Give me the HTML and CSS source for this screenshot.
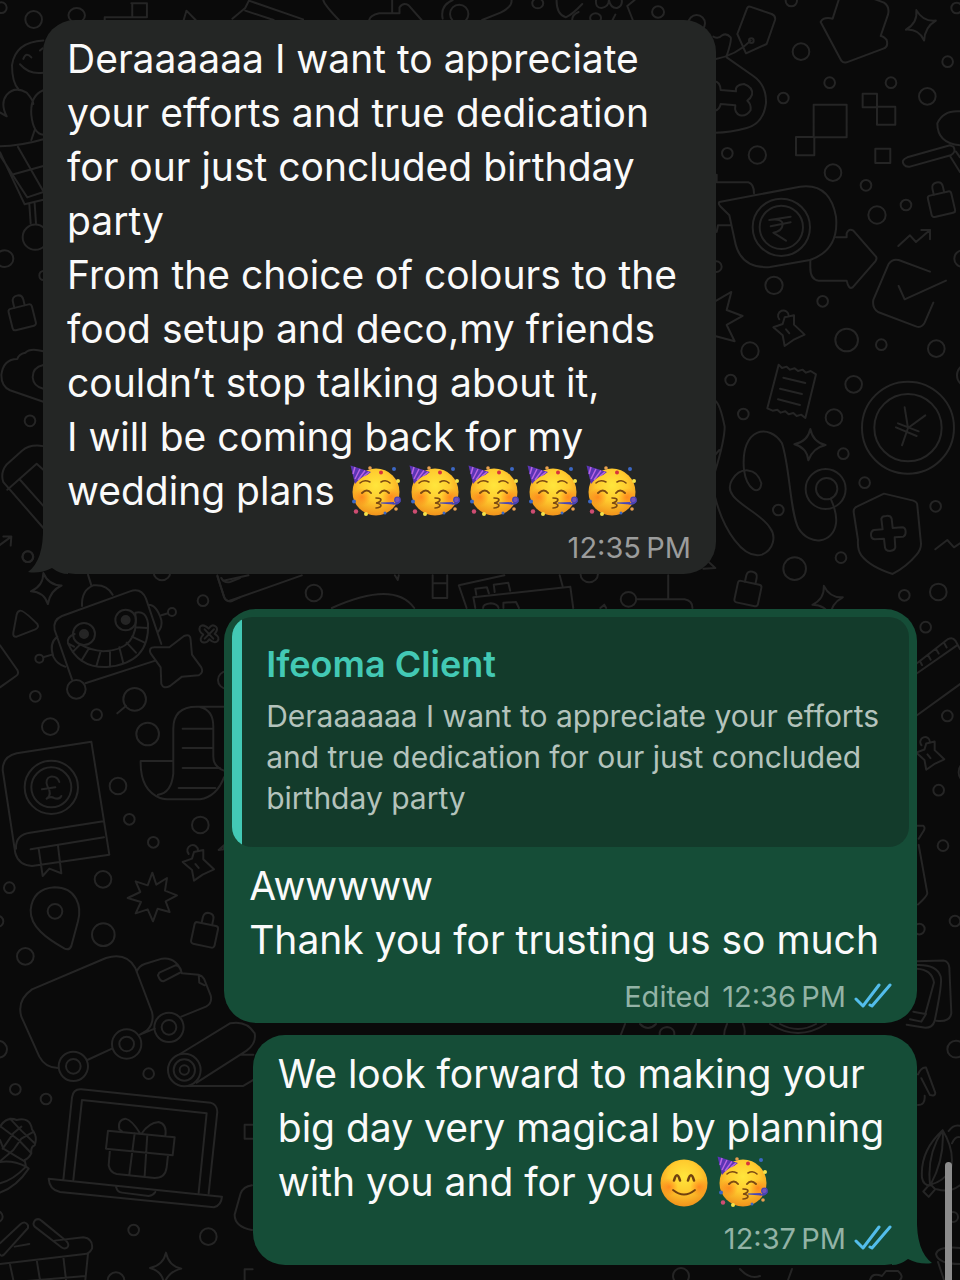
FILE: index.html
```html
<!DOCTYPE html>
<html lang="en">
<head>
  <meta charset="utf-8">
  <title>Chat</title>
  <link rel="stylesheet" href="styles.css">
</head>
<body>
  <!-- doodle wallpaper -->
  <svg class="wallpaper" viewBox="0 0 960 1280" preserveAspectRatio="xMidYMin slice" aria-hidden="true">
    <defs>
      <path id="spark" d="M0-48Q8-8 46 0Q8 8-6 46Q-10 8-48-2Q-8-10 0-48Z"/>
      <g id="lock"><rect x="-36" y="-22" width="72" height="66" rx="8"/><path d="M-16-22V-40Q-16-56 0-56T16-40V-22"/></g>
      <path id="pin" d="M-8-34L20-40 20-12 52 18 18 34-8 52-14 20-42-4-14-14ZM-24-28A16 16 0 1 1 4-38M-4 2L6 14"/>
      <path id="burst" d="M0-72L12-36 44-56 38-18 74-4 40 14 52 46 16 36 2 74-14 38-50 50-34 16-74 4-36-14-50-46-14-34Z"/>
    </defs>

    <!-- strip above the first message -->
    <g transform="scale(.4592 .3333)">
      <path d="M286 10H320V52H228V60M288 10V52M400 60L406 32 426 60M506 56L534 24 542 2 660 58M534 32L596 60M704 0Q706 14 738 60M854 0V40H826Q806 46 804 60M854 40H870V22Q878 6 890 16L918 60M986 0Q958 16 964 56M1114 0Q1116 20 1090 38L1050 60M1212 0Q1212 44 1232 52Q1246 44 1268 12M1246 60Q1246 44 1260 36M1298 0Q1296 24 1310 24Q1326 20 1326 0Q1330 26 1344 24Q1356 18 1354 0M1368 16L1382 0M1366 18L1378 60M1340 44L1334 60"/>
      <ellipse cx="167" cy="46" rx="18" ry="22"/><ellipse cx="1000" cy="42" rx="20" ry="28"/><ellipse cx="1171" cy="10" rx="12" ry="15"/><ellipse cx="1297" cy="54" rx="12" ry="14"/><ellipse cx="1433" cy="36" rx="13" ry="17"/>
    </g>

    <!-- right side, top -->
    <g transform="translate(700 0) scale(.3333)">
      <path d="M150 20L215 42Q228 48 225 60L200 132 138 160 112 102 140 28Q143 18 150 20ZM45 178Q110 165 152 122"/>
      <circle cx="154" cy="122" r="7"/>
      <path d="M40 110Q55 118 66 106Q80 98 92 112Q96 120 80 168M80 172L160 228Q200 256 198 310Q190 370 140 384Q90 398 45 398"/>
      <path d="M45 244Q60 246 62 270L108 274Q104 254 132 252Q160 262 156 284Q152 296 142 302Q154 312 152 330Q140 350 120 346Q102 338 106 316L62 312Q58 330 45 332"/>
      <path d="M416 0L398 56Q370 50 362 66L424 182Q430 190 440 187L550 146Q566 140 560 120Q550 108 542 108L564 44Q570 20 552 8L520-4"/>
      <use href="#spark" transform="translate(664 76) rotate(-18)"/>
      <path d="M341 314H440V412H341ZM288 411H343V466H288ZM488 281H531V322H488ZM531 320H586V374H531ZM526 446H571V489H526Z"/>
      <path d="M780 334Q730 330 712 370Q712 430 780 436M750 436L622 472Q602 480 612 494Q618 502 630 500L752 466Q770 456 760 440ZM750 468L780 516M768 455L780 472"/>
      <path d="M50 524V547H145Q162 552 162 580M50 696L54 676H90M58 606L300 560Q390 548 408 650Q418 750 330 780L210 801Q120 808 104 720L88 646 60 618Q54 610 58 606Z"/>
      <circle cx="244" cy="682" r="86"/><circle cx="244" cy="682" r="65"/>
      <path d="M208 660L272 650M212 679L272 667M214 659Q248 656 248 674Q246 694 220 698L258 722"/>
      <path d="M408 712H440V700Q446 684 460 692L528 770Q532 776 526 784L458 862Q446 870 440 842H356Q330 840 331 800V780"/>
      <use href="#lock" transform="translate(722 602) rotate(-13)"/>
      <path d="M595 738L630 706 648 726 690 690M664 690H690V718M690 815L596 780Q576 776 566 792L520 900Q516 924 534 936L650 980Q666 984 674 968L700 908M596 858L614 898 738 842"/>
      <path d="M45 904L94 876 80 930 128 948 80 975 104 1024 45 1008"/>
      <use href="#pin" transform="translate(262 986)"/>
      <g><circle cx="274" cy="2" r="17"/><circle cx="303" cy="155" r="25"/><circle cx="389" cy="248" r="16"/><circle cx="573" cy="248" r="16"/><circle cx="250" cy="294" r="16"/><circle cx="682" cy="289" r="25"/><circle cx="743" cy="185" r="16"/><circle cx="770" cy="24" r="16"/><circle cx="82" cy="460" r="16"/><circle cx="172" cy="465" r="26"/><circle cx="399" cy="518" r="25"/><circle cx="498" cy="556" r="16"/><circle cx="531" cy="645" r="26"/><circle cx="618" cy="615" r="16"/><circle cx="788" cy="776" r="25"/><circle cx="49" cy="800" r="16"/><circle cx="222" cy="856" r="26"/><circle cx="368" cy="904" r="16"/><circle cx="-10" cy="70" r="25"/></g>
    </g>

    <!-- right side, middle -->
    <g transform="translate(700 300) scale(.3333)">
      <path d="M236 194l10 10 14-4 10 9 14-4 10 8 14-4 10 9 14-5 16 10L316 354l-12-10-14 4-10-9-14 4-10-9-14 4-10-9-14 3-16-7ZM250 233L316 249M240 266L306 282M234 298L300 315"/>
      <use href="#spark" transform="translate(331 435)"/>
      <circle cx="624" cy="383" r="138"/><circle cx="624" cy="383" r="101"/>
      <path d="M614 322L624 384 606 436M624 384L676 346M594 370L656 394M588 382L650 408"/>
      <path d="M45 302Q60 310 74 380Q74 420 45 515M45 465L58 450M45 590C70 690 130 780 186 764C220 750 230 710 210 684C180 630 60 600 96 540C120 500 170 500 184 550C180 590 140 570 132 510C120 380 210 370 246 430C270 500 270 640 296 686C330 740 400 730 408 670Q412 640 392 596"/>
      <circle cx="377" cy="567" r="60"/><circle cx="380" cy="566" r="32"/>
      <path d="M552 581L640 602Q652 606 652 616L663 730Q664 748 650 764Q620 800 578 822Q510 800 484 766Q472 750 474 720L461 636Q460 624 472 619Z"/>
      <path d="M544 656Q546 648 558 648Q572 646 575 656L578 684 606 682Q616 682 617 694Q618 706 610 710L584 712 586 742Q584 752 570 753Q556 752 555 742L552 716 524 718Q512 716 513 702Q514 692 522 690L548 688Z"/>
      <path d="M706 748L742 720 762 742 780 730"/>
      <use href="#lock" transform="translate(146 870) rotate(12)"/>
      <use href="#spark" transform="translate(384 904) rotate(-15)"/>
      <path d="M22 782L46 804 10 806"/>
      <g><circle cx="440" cy="120" r="34"/><circle cx="544" cy="134" r="16"/><circle cx="709" cy="146" r="25"/><circle cx="150" cy="153" r="26"/><circle cx="92" cy="240" r="16"/><circle cx="461" cy="253" r="25"/><circle cx="130" cy="342" r="16"/><circle cx="402" cy="353" r="25"/><circle cx="430" cy="461" r="16"/><circle cx="494" cy="548" r="16"/><circle cx="707" cy="619" r="16"/><circle cx="235" cy="630" r="16"/><circle cx="423" cy="773" r="16"/><circle cx="284" cy="806" r="34"/><circle cx="613" cy="886" r="16"/><circle cx="715" cy="876" r="25"/><circle cx="805" cy="226" r="34"/></g>
    </g>

    <!-- left side, robot and book -->
    <g transform="translate(0 560) scale(.3333)">
      <use href="#spark" transform="translate(140 86) rotate(-12)"/>
      <path d="M60 152Q70 150 112 192Q118 202 106 208L50 230Q38 232 40 218L50 164Q52 154 60 152Z"/>
      <path d="M216 358L164 210Q158 180 186 168L390 94Q424 82 438 116L484 252M256 370L466 302M246 138Q244 90 280 76Q320 72 338 104M274 76L264 44M172 230Q146 250 160 290Q172 314 196 320M132 291L156 284M446 134Q470 134 484 180Q488 200 474 216M484 166L504 160"/>
      <circle cx="118" cy="296" r="12"/><circle cx="516" cy="156" r="12"/><circle cx="229" cy="388" r="28"/>
      <circle cx="252" cy="222" r="33"/><circle cx="377" cy="180" r="31"/><circle class="dot" cx="252" cy="222" r="12"/><circle class="dot" cx="377" cy="180" r="12"/>
      <path d="M224 222Q200 230 204 250Q236 324 320 321Q450 310 444 190Q438 150 406 158M406 160Q420 270 310 274Q270 270 242 254M204 250L222 260M218 276L240 254M244 302L266 266M290 316L302 274M330 320V274M370 310L358 262M408 278L380 248M434 248L396 230M442 204L406 202"/>
      <path d="M552 228Q572 220 572 240L576 284 604 322Q612 338 596 346L546 350 510 378Q490 388 484 372L482 322 452 280Q444 262 464 262L508 262Z"/>
      <path d="M600 200Q610 190 626 206Q636 190 648 200Q656 208 644 222Q662 232 652 244Q642 252 628 238Q620 252 606 246Q596 238 610 224Q594 214 600 200ZM614 208L640 236M642 208L614 236"/>
      <path d="M0 256L52 330Q58 342 48 348L0 382M352 460L378 438"/>
      <path d="M274 545L50 580Q8 590 8 630L46 880Q56 916 96 918L328 884ZM310 784L90 818Q46 824 48 866M312 832L92 868M116 866L128 948 148 926 184 940 174 858"/>
      <circle cx="154" cy="682" r="80"/><circle cx="154" cy="682" r="60"/>
      <path d="M178 666Q172 648 152 650Q134 656 142 678Q158 704 140 716Q152 708 162 714Q178 720 184 708M126 688L166 682"/>
      <path d="M672 440H590Q520 440 520 506V640Q514 700 474 704M600 441Q640 450 640 500V590Q640 620 672 632M516 603H422Q420 690 480 714Q490 718 510 718H600Q650 710 672 652M548 506H636M548 564H636M548 624H660M536 684H646"/>
      <use href="#pin" transform="translate(590 910)"/>
      <path d="M656 870L672 856V868ZM652 46L672 110Q678 126 694 124L720 112M664 54Q672 70 690 66L720 54"/>
      <g><circle cx="609" cy="122" r="16"/><circle cx="486" cy="36" r="25"/><circle cx="84" cy="-10" r="16"/><circle cx="106" cy="409" r="16"/><circle cx="404" cy="418" r="34"/><circle cx="290" cy="464" r="16"/><circle cx="151" cy="500" r="25"/><circle cx="443" cy="522" r="34"/><circle cx="354" cy="678" r="25"/><circle cx="388" cy="778" r="16"/><circle cx="601" cy="795" r="25"/><circle cx="460" cy="847" r="16"/><circle cx="680" cy="360" r="26"/></g>
    </g>

    <!-- left side, van and laptop -->
    <g transform="translate(0 860) scale(.3333)">
      <path d="M164 82C230 82 246 140 234 184L214 258Q208 272 194 266C140 236 90 200 92 150Q98 86 164 82Z"/><circle cx="165" cy="154" r="22"/>
      <use href="#burst" transform="translate(457 110)"/>
      <use href="#lock" transform="translate(616 214) rotate(12)"/>
      <path d="M174 624Q136 624 118 590L64 470Q50 420 96 388L318 294Q380 276 406 324L456 456Q464 490 440 512L420 524M262 600L336 566M420 524L464 506M410 336Q416 318 434 312L486 296Q530 290 546 340L596 344Q606 346 612 356L632 406Q638 430 618 440L544 470M478 338L526 316Q542 318 544 336L490 364Q480 364 474 346ZM596 344L598 368 614 376"/>
      <circle cx="220" cy="619" r="44"/><circle cx="220" cy="619" r="22"/><circle cx="380" cy="552" r="44"/><circle cx="380" cy="552" r="22"/><circle cx="507" cy="502" r="44"/><circle cx="507" cy="502" r="22"/>
      <circle cx="553" cy="630" r="49"/><circle cx="553" cy="630" r="32"/><circle cx="553" cy="630" r="14"/>
      <path d="M540 582L690 490Q740 480 764 520Q770 550 740 572L590 668M560 678H730L760 660M724 584H760"/>
      <path d="M190 960L216 712Q220 686 244 688L632 728Q652 734 652 756L626 1000M220 960L246 720 620 760 596 998M146 956L666 1010Q664 1036 642 1042L180 996Q148 990 146 956ZM348 980Q352 996 366 998L446 1008Q460 1006 466 996"/>
      <path d="M324 812L524 832 518 886 318 866ZM404 820L388 944M442 824L434 948M330 868L326 916Q330 938 350 942L464 954Q496 954 500 922L504 886M420 820Q396 780 376 776Q352 780 358 808L366 814M424 822Q446 788 476 786Q502 792 496 828"/>
      <path d="M0 800Q20 768 50 780Q90 770 96 808Q114 830 104 856Q92 860 94 880Q86 896 74 900L78 920 86 926Q50 980 0 998M0 798L56 840 94 880M8 866L40 820 64 800M0 904L40 870 64 836 100 816M0 840L10 866 40 884 74 904M0 906Q40 900 78 920Q40 960 0 970M30 776L64 812 104 850"/>
      <path d="M0 1150L62 1092Q76 1082 84 1096L84 1104 12 1184Q4 1190 0 1184M106 1080Q116 1074 124 1082L200 1144Q210 1156 200 1164Q192 1168 184 1162L104 1100Q96 1090 106 1080ZM44 1160L88 1152M164 1142L250 1132Q280 1136 276 1166Q268 1182 254 1182L0 1212M30 1214L40 1260M110 1200L120 1260M190 1190L198 1260M264 1182L256 1260M0 1270L256 1248"/>
      <path d="M756 976Q730 980 722 1000L704 1064Q704 1100 756 1110M758 794H734V836H758M758 1228H734V1260"/>
      <use href="#spark" transform="translate(498 1226)"/>
      <g><circle cx="28" cy="83" r="16"/><circle cx="309" cy="58" r="25"/><circle cx="310" cy="224" r="34"/><circle cx="76" cy="289" r="25"/><circle cx="-6" cy="184" r="16"/><circle cx="-4" cy="568" r="25"/><circle cx="446" cy="641" r="16"/><circle cx="46" cy="688" r="16"/><circle cx="138" cy="717" r="16"/><circle cx="401" cy="1110" r="16"/><circle cx="625" cy="1130" r="25"/><circle cx="348" cy="1262" r="25"/><circle cx="-8" cy="1070" r="16"/></g>
    </g>

    <!-- left edge, beside the first message -->
    <g transform="scale(.3333 .3826)">
      <path d="M130 106Q46 110 36 170Q36 216 56 234M60 168Q88 196 130 190M70 154Q78 134 94 150M120 132L128 126M20 304Q0 270 20 248Q44 224 80 242Q100 262 100 272M130 236Q90 250 94 300Q100 350 130 352M0 294L20 304M0 382Q60 382 130 364M104 340L94 366M0 398L74 534 130 522M0 406L82 516 130 502M54 384L130 500M38 456L130 434M88 534L92 584M104 532L108 584"/>
      <ellipse cx="106" cy="620" rx="38" ry="33"/>
      <use href="#lock" transform="translate(64 820) scale(1 .87) rotate(-14)"/>
      <path d="M130 918Q90 908 76 922Q56 926 52 938Q10 938 4 980Q4 1010 30 1020L130 1050M130 954Q98 960 98 986Q100 1010 130 1016M130 1166Q90 1160 66 1178L20 1214Q0 1236 10 1260L130 1380M22 1280L110 1212 130 1228M58 1252L130 1322M0 1424L32 1404M10 1402L34 1402 32 1426"/>
      <g><ellipse cx="101" cy="51" rx="25" ry="22"/><ellipse cx="4" cy="20" rx="16" ry="14"/><ellipse cx="14" cy="676" rx="26" ry="22"/><ellipse cx="130" cy="720" rx="12" ry="12"/><ellipse cx="90" cy="1100" rx="16" ry="14"/><ellipse cx="83" cy="1455" rx="16" ry="14"/></g>
    </g>

    <!-- strip between the messages -->
    <g transform="translate(200 560) scale(.4847 .3333)">
      <path d="M36 50L50 112Q54 128 66 120L210 46M48 62L100 46M272 144Q400 60 442 144M402 46L408 60 410 46M480 46V114H510V46M480 70H510M550 144L534 76 628 46M742 46L748 78M568 144L564 112 764 80 770 144M570 104L568 86 592 82 596 100M608 96L606 74 636 68 640 92M584 144Q584 132 600 130Q614 132 616 144M626 144V128L652 126 658 144M966 46V116M900 118H1000Q1016 122 1016 144M826 144L834 134 838 144"/>
      <ellipse cx="235" cy="99" rx="17" ry="25"/><ellipse cx="884" cy="118" rx="16" ry="22"/><ellipse cx="803" cy="42" rx="18" ry="25"/>
    </g>

    <!-- right edge, beside the replies -->
    <g transform="translate(900 600) scale(.3333 .3826)">
      <path d="M50 166L144 102Q158 96 166 106L180 128M50 192L172 118M60 160L66 170M84 144L92 156M108 128L116 140M132 112L140 124M50 302L180 220M50 590H70Q76 594 72 602L56 624M56 640L82 766Q82 774 54 796M50 944L130 942Q146 944 148 960L154 1080Q150 1104 110 1100M50 954Q110 952 122 984Q128 1000 104 1100Q98 1118 76 1118L20 1110M50 964Q96 966 102 1000L76 1082 40 1076M30 1096L64 1102 78 1082M54 1240Q64 1220 78 1222L106 1288Q106 1298 90 1294L64 1250M74 1296Q76 1320 54 1320"/>
      <path d="M128 1386Q60 1440 66 1510Q70 1530 90 1530M128 1386Q80 1450 90 1526M128 1386Q166 1440 152 1490Q130 1520 92 1528M128 1386Q134 1460 92 1528M70 1546L90 1526 106 1540 86 1560ZM146 1388Q160 1370 180 1374M156 1420Q166 1400 180 1404M110 1540Q150 1550 180 1530"/>
      <use href="#pin" transform="translate(86 402) scale(.9 .8)"/>
      <g><ellipse cx="77" cy="71" rx="16" ry="14"/><ellipse cx="142" cy="303" rx="16" ry="14"/><ellipse cx="116" cy="497" rx="16" ry="14"/><ellipse cx="129" cy="642" rx="16" ry="14"/><ellipse cx="165" cy="839" rx="16" ry="14"/><ellipse cx="58" cy="860" rx="16" ry="14"/><ellipse cx="168" cy="1174" rx="26" ry="22"/><ellipse cx="210" cy="450" rx="34" ry="30"/></g>
    </g>

    <!-- gaps under the replies -->
    <path d="M625 1024L620 1037M696 1024L690 1037M727 1024Q724 1030 724 1037M743 1024Q746 1030 744 1037M770 1024Q798 1042 826 1024M780 1024Q798 1034 816 1024M660 1037Q658 1028 667 1027Q676 1028 674 1037M640 1024Q648 1032 656 1024M740 1269Q750 1280 760 1276M792 1269L788 1280M870 1280Q872 1272 882 1276L886 1271H898Q904 1276 900 1280"/>
    <circle cx="681" cy="1276" r="8"/>
    <circle cx="953" cy="1217" r="5"/>
    <path d="M960 1248Q938 1246 936 1254Q938 1264 960 1264M938 1262L944 1280"/>
  </svg>

  <svg class="symbols" aria-hidden="true">
    <defs>
      <radialGradient id="skin" cx="50%" cy="36%" r="66%">
        <stop offset="0" stop-color="#ffe63c"/>
        <stop offset=".5" stop-color="#ffcb2e"/>
        <stop offset="1" stop-color="#f08f1a"/>
      </radialGradient>
      <radialGradient id="blush">
        <stop offset="0" stop-color="#ff7418" stop-opacity=".7"/>
        <stop offset="1" stop-color="#ff7418" stop-opacity="0"/>
      </radialGradient>
      <symbol id="party" viewBox="0 0 52 52">
        <circle cx="26" cy="27" r="23.5" fill="url(#skin)"/>
        <circle cx="12" cy="32" r="9" fill="url(#blush)"/>
        <circle cx="41" cy="32" r="9" fill="url(#blush)"/>
        <path d="M.5.5L21 7Q18 10 14 11Q9 14 5 19Z" fill="#5b35b5"/>
        <path d="M5 2L3 9M10 4L5 14M15 5.500L8 15M19 7L14 11" stroke="#b764e0" stroke-width="1.500" fill="none"/>
        <g fill="none" stroke="#7c4a12" stroke-width="1.600" stroke-linecap="round">
          <path d="M10 18Q14 14 20 17M31 17Q36 14 40 18"/>
          <path d="M12 28Q17 23 21 28M30 28Q34 23 39 28" stroke-width="2"/>
          <path d="M26 33Q33 33 30 36.500Q28 38 26 38Q33 39 30 42Q28 43 26 43"/>
        </g>
        <path d="M31 37.500L44 37V39.500L31 38.500Z" fill="#4747b8"/>
        <circle cx="47.500" cy="35" r="2.800" fill="#7551b8" stroke="#4a43b5" stroke-width="1.200"/>
        <path d="M50 36Q48 40 43 38.500" fill="none" stroke="#4a43b5" stroke-width="1.600"/>
        <g fill="#e9a050"><circle cx="20" cy="3" r="1.800"/><circle cx="46" cy="44" r="1.800"/></g>
        <g fill="#d8343c"><circle cx="31" cy="7.500" r="2"/><circle cx="6" cy="46.500" r="2.200" fill="#cf4d72"/></g>
        <g fill="#3c67c4"><circle cx="44" cy="4" r="2"/><circle cx="4" cy="36.500" r="2"/><circle cx="35" cy="48" r="1.500"/></g>
        <g fill="#f3e24a"><circle cx="48" cy="16" r="2"/><circle cx="16" cy="49" r="2"/></g>
      </symbol>
      <symbol id="smile" viewBox="0 0 52 52">
        <circle cx="26" cy="27" r="23.500" fill="url(#skin)"/>
        <circle cx="11" cy="31" r="9" fill="url(#blush)"/>
        <circle cx="41" cy="31" r="9" fill="url(#blush)"/>
        <g fill="none" stroke="#70400f" stroke-linecap="round">
          <path d="M16 24.500Q19 14 22 24.500M30 24.500Q33 14 36 24.500" stroke-width="2.600"/>
          <path d="M15 34Q26 43 37 34" stroke-width="1.800"/>
        </g>
      </symbol>
      <symbol id="ticks" viewBox="0 0 38 26">
        <path d="M2 16L9 23 25 2M16 22L18 23 36 2" fill="none" stroke="#53bdeb" stroke-width="3" stroke-linecap="round" stroke-linejoin="round"/>
      </symbol>
    </defs>
  </svg>

  <main class="chat">
    <article class="bubble incoming">
      <p class="text">Deraaaaaa I want to appreciate<br>your efforts and true dedication<br>for our just concluded birthday<br>party<br>From the choice of colours to the<br>food setup and deco,my friends<br>couldn’t stop talking about it,<br>I will be coming back for my<br>wedding plans <span class="emojis"><svg class="emoji"><use href="#party"/></svg><svg class="emoji"><use href="#party"/></svg><svg class="emoji"><use href="#party"/></svg><svg class="emoji"><use href="#party"/></svg><svg class="emoji"><use href="#party"/></svg></span></p>
      <div class="meta"><time>12:35&#8239;PM</time></div>
      <svg class="tail tail-left" viewBox="0 0 40 48"><path d="M15 0Q16 34 0 46Q12 48 24 42Q32 48 40 48V0Z"/></svg>
    </article>

    <article class="bubble outgoing">
      <blockquote class="quote">
        <h2 class="quote-name">Ifeoma Client</h2>
        <p class="quote-text">Deraaaaaa I want to appreciate your efforts<br>and true dedication for our just concluded<br>birthday party</p>
      </blockquote>
      <p class="text">Awwwww<br>Thank you for trusting us so much</p>
      <div class="meta"><span class="edited">Edited</span><time>12:36&#8239;PM</time><svg class="ticks"><use href="#ticks"/></svg></div>
    </article>

    <article class="bubble outgoing">
      <p class="text">We look forward to making your<br>big day very magical by planning<br>with you and for you<span class="emojis"><svg class="emoji"><use href="#smile"/></svg><svg class="emoji"><use href="#party"/></svg></span></p>
      <div class="meta"><time>12:37&#8239;PM</time><svg class="ticks"><use href="#ticks"/></svg></div>
      <svg class="tail tail-right" viewBox="0 0 40 48"><path d="M25 0Q24 34 40 46Q28 48 16 42Q8 48 0 48V0Z"/></svg>
    </article>
  </main>

  <div class="scrollbar"></div>
</body>
</html>
```
FILE: styles.css
```css
* {
  box-sizing: border-box;
}

body {
  margin: 0;
  min-height: 100vh;
  position: relative;
  overflow: hidden;
  background-color: #0a0a0a;
  color: #fafafa;
  font-family: Inter, "Liberation Sans", sans-serif;
}

p,
h2,
blockquote {
  margin: 0;
}

.wallpaper {
  position: absolute;
  top: 0;
  left: 0;
  width: 100%;
  height: 100%;
  fill: none;
  stroke: #252525;
  stroke-width: 2px;
  stroke-linejoin: round;
  stroke-linecap: round;
}

.wallpaper path,
.wallpaper circle,
.wallpaper ellipse,
.wallpaper rect {
  vector-effect: non-scaling-stroke;
}

.wallpaper .dot {
  fill: #252525;
}

.symbols {
  position: absolute;
  width: 0;
  height: 0;
}

.chat {
  position: relative;
  display: flex;
  flex-direction: column;
  align-items: flex-start;
  padding: 20px 43px 0;
}

.bubble {
  position: relative;
  min-width: 76%;
  border-radius: 32px;
  padding: 12px 25px 3px;
}

.incoming {
  min-width: 77%;
  padding-left: 24px;
  background-color: #242625;
  fill: #242625;
  margin-bottom: 35px;
}

.outgoing {
  align-self: flex-end;
  background-color: #154d37;
  fill: #154d37;
  margin-bottom: 12px;
}

.text {
  font-size: 39px;
  line-height: 54px;
  white-space: nowrap;
}

.emojis {
  display: inline-flex;
  gap: 7px;
  height: 52px;
  vertical-align: -12px;
  margin: -4px 0 -4px 4px;
}

.emoji {
  width: 52px;
  height: 52px;
}

.meta {
  display: flex;
  justify-content: flex-end;
  align-items: center;
  gap: 8px;
  height: 48px;
  margin-top: 5px;
  font-size: 29px;
  color: #9b9c9c;
}

.outgoing .meta {
  color: #93b3a6;
}

.edited {
  margin-right: 4px;
}

.ticks {
  width: 38px;
  height: 26px;
}

.quote {
  margin: -4px -17px 12px;
  padding: 26px 30px 28px 34px;
  border-radius: 20px;
  background: linear-gradient(to right, #43c9b5 10px, #133b2b 10px);
}

.quote-name {
  margin-bottom: 11px;
  font-size: 36px;
  line-height: 42px;
  font-weight: 600;
  color: #43c9b5;
}

.quote-text {
  font-size: 30px;
  line-height: 41px;
  color: #b4c3bc;
  white-space: nowrap;
}

.tail {
  position: absolute;
  bottom: 0;
  width: 40px;
  height: 48px;
}

.tail-left {
  left: -15px;
}

.tail-right {
  right: -15px;
}

.scrollbar {
  position: absolute;
  right: 8px;
  bottom: 0;
  width: 7px;
  height: 118px;
  border-radius: 4px 4px 0 0;
  background-color: #8c8c8c;
}
```
